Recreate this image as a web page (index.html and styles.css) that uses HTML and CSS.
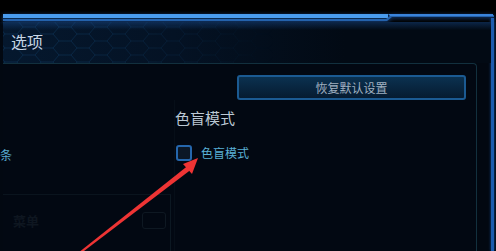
FILE: index.html
```html
<!DOCTYPE html>
<html lang="zh-CN">
<head>
    <meta charset="UTF-8">
    <meta name="viewport" content="width=device-width, initial-scale=1.0">
    <title>选项</title>
    <link rel="stylesheet" href="styles.css">
</head>
<body>
    <div class="screen">
        <svg class="frame-top" width="496" height="9" viewBox="0 0 496 9">
            <polygon points="3,1 387,1 387,8 3,8" fill="#0a2a50"/>
            <polygon points="3,1 388,1 388,5 3,5" fill="#4a9cee"/>
            <polygon points="3,6 386,6 391,2 494,2 494,4 392,4 387,8 3,8" fill="#2462ac"/>
            <polygon points="388,1 493,1 493,3 390,3" fill="#3a84dc"/>
        </svg>

        <div class="window">
            <div class="main">
                <div class="title-bar">
                    <svg class="hex-bg" width="300" height="41">
                        <defs>
                            <pattern id="hex" width="36" height="14" patternUnits="userSpaceOnUse" x="-4" y="-2">
                                <path d="M0,7 L6,0 L18,0 L24,7 L18,14 L6,14 Z M24,7 L36,7" fill="none" stroke="#0b2f50" stroke-width="0.8"/>
                            </pattern>
                        </defs>
                        <rect width="300" height="41" fill="url(#hex)"/>
                    </svg>
                    <h1>选项</h1>
                </div>

                <div class="panel">
                    <div class="toolbar">
                        <button class="reset-btn">恢复默认设置</button>
                    </div>

                    <div class="options">
                        <div class="col-left">
                            <div class="cut-label">条</div>
                            <div class="sub-box">
                                <span class="faint-title">菜单</span>
                                <span class="faint-icon"></span>
                            </div>
                        </div>
                        <div class="col-mid">
                            <h2 class="group-title">色盲模式</h2>
                            <label class="check-row">
                                <span class="checkbox"></span>
                                <span class="check-text">色盲模式</span>
                            </label>
                        </div>
                    </div>
                </div>
            </div>
            <div class="rail"></div>
        </div>

        <svg class="arrow" width="496" height="251" viewBox="0 0 496 251">
            <polygon points="80.5,251 84,251 190.5,170 187.5,166" fill="#ee3434"/>
            <polygon points="198,158 183,164 192,174" fill="#ee3434"/>
        </svg>
    </div>
</body>
</html>
```

FILE: styles.css
```css
* {
    margin: 0;
    padding: 0;
    box-sizing: border-box;
}

body {
    width: 496px;
    height: 251px;
    overflow: hidden;
    background-color: #000;
    font-family: "Noto Sans CJK SC", "Noto Sans", sans-serif;
}

.screen {
    position: relative;
    height: 251px;
    padding-top: 13px;
}

.frame-top {
    display: block;
    filter: drop-shadow(0 1px 2px rgba(40, 120, 230, 0.6));
}

.window {
    display: flex;
    height: 229px;
    background-color: #020811;
}

.main {
    flex: 1;
    margin-left: 3px;
}

.title-bar {
    position: relative;
    height: 41px;
    background: linear-gradient(to right, #05182e 0%, #041224 35%, #020a14 70%);
}

.hex-bg {
    position: absolute;
    top: 0;
    left: 0;
    -webkit-mask-image: linear-gradient(to right, rgba(0,0,0,0.9) 20%, rgba(0,0,0,0) 90%);
    mask-image: linear-gradient(to right, rgba(0,0,0,0.9) 20%, rgba(0,0,0,0) 90%);
}

.title-bar::after {
    content: "";
    position: absolute;
    left: 0;
    right: 0;
    top: 0;
    height: 8px;
    background: linear-gradient(to bottom, rgba(30, 90, 170, 0.35), rgba(30, 90, 170, 0));
}

.title-bar h1 {
    position: relative;
    padding: 9px 0 0 8px;
    font-size: 16px;
    line-height: 20px;
    font-weight: normal;
    color: #c6d4e4;
}

.panel {
    height: 188px;
    margin-right: 14px;
    border-top: 1px solid #12303e;
    border-right: 1px solid #12303e;
    border-top-right-radius: 4px;
    background-color: #020812;
}

.toolbar {
    display: flex;
    justify-content: flex-end;
    padding: 11px 10px 0 0;
}

.reset-btn {
    width: 229px;
    height: 25px;
    border: 2px solid #1b5a92;
    border-radius: 3px;
    background: linear-gradient(to bottom, #0b3150, #061b30);
    color: #a0b0c0;
    font-family: inherit;
    font-size: 12px;
}

.options {
    display: grid;
    grid-template-columns: 171px 1fr;
}

.col-left {
    padding-top: 47px;
}

.cut-label {
    margin-left: -3px;
    font-size: 12px;
    line-height: 16px;
    color: #58a8d0;
}

.sub-box {
    display: flex;
    align-items: center;
    justify-content: space-between;
    width: 168px;
    height: 60px;
    margin-top: 31px;
    padding: 0 4px 8px 10px;
    border-top: 1px solid #0a141e;
    border-right: 1px solid #0c1822;
}

.faint-title {
    font-size: 13px;
    font-weight: bold;
    color: #0e1620;
}

.faint-icon {
    width: 24px;
    height: 17px;
    border: 1px solid #0e1822;
    border-radius: 3px;
}

.col-mid {
    padding-top: 8px;
    border-left: 1px solid #060e18;
}

.group-title {
    font-size: 15px;
    line-height: 20px;
    font-weight: normal;
    color: #bcc8d4;
}

.check-row {
    display: flex;
    align-items: center;
    gap: 9px;
    margin-top: 17px;
    margin-left: 1px;
}

.checkbox {
    width: 16px;
    height: 16px;
    border: 2px solid #2566ac;
    border-radius: 3px;
    background-color: #0b1726;
}

.check-text {
    font-size: 12px;
    line-height: 16px;
    color: #5ab0d6;
}

.rail {
    width: 3px;
    margin-right: 2px;
    margin-top: -4px;
    background-color: #1d5cae;
    box-shadow: 0 0 3px rgba(40, 110, 210, 0.7);
}

.arrow {
    position: absolute;
    top: 0;
    left: 0;
    pointer-events: none;
}
```
